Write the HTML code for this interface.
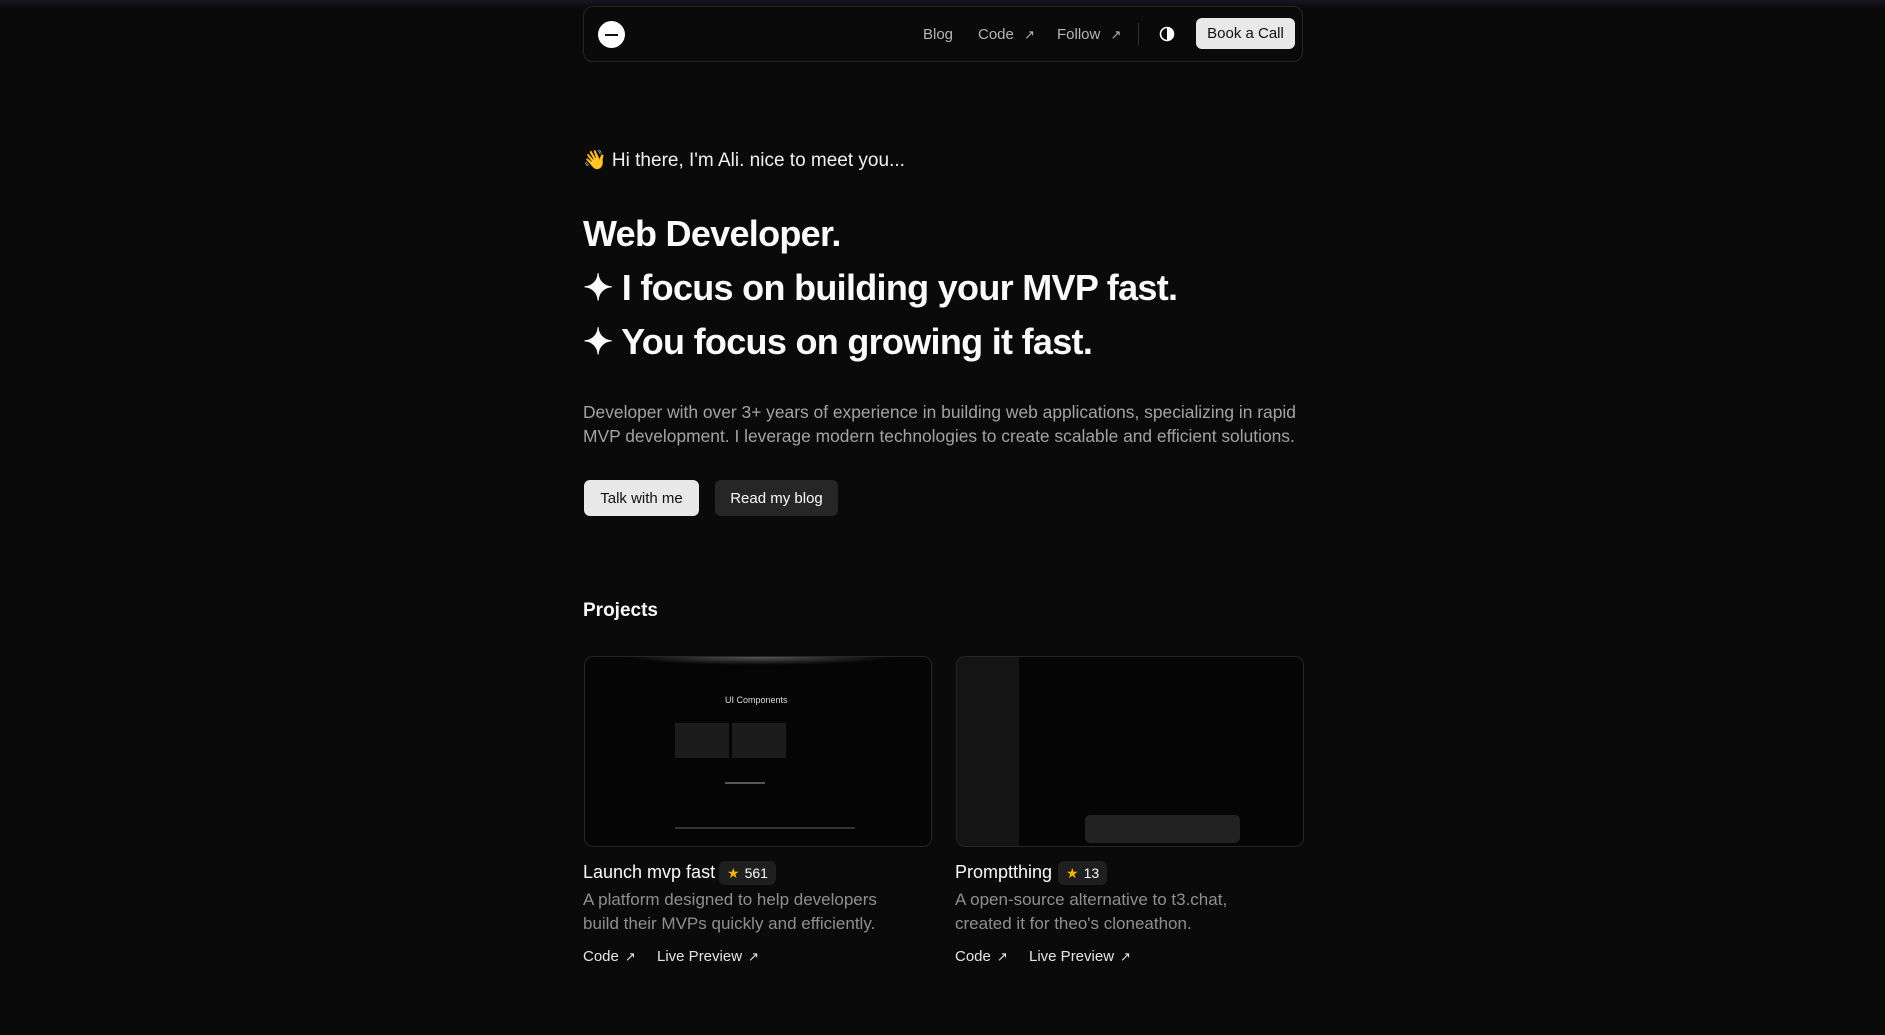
<!DOCTYPE html>
<html><head><meta charset="utf-8">
<style>
*{box-sizing:border-box;margin:0;padding:0}
html,body{width:1885px;height:1035px;overflow:hidden;background:#0a0a0a;color:#fafafa;font-family:"Liberation Sans",sans-serif}
body{background:linear-gradient(#1a1425 0px,#0a0a0a 8px)}
.abs{position:absolute}
.nav{left:583px;top:6px;width:720px;height:56px;border:1px solid #262626;border-radius:10px;background:#0a0a0a}
.logo{left:598px;top:21px;width:27px;height:27px;border-radius:50%;background:#fff}
.navlink{top:26px;font-size:15px;color:#b5b5b5}
.btn{border-radius:6px;font-size:15px;display:flex;align-items:center;justify-content:center}
h1{position:absolute;left:583px;top:207px;font-size:36px;font-weight:700;line-height:54px;letter-spacing:-0.7px;color:#fafafa}
.p{left:583px;top:400px;width:730px;font-size:17.4px;line-height:24px;color:#a3a3a3}
.card{width:348px;height:191px;top:656px;border:1px solid #262626;border-radius:9px;background:#050505;overflow:hidden}
.title{top:862px;font-size:18px;color:#fafafa}
.badge{top:861px;height:24px;border-radius:6px;background:#1f1f1f;font-size:14px;display:flex;align-items:center;padding:0 8px;gap:5px}
.desc{top:888px;font-size:17px;line-height:24px;color:#8f8f8f;width:305px}
.lk{top:948px;font-size:15px;color:#e5e5e5}
.ar{font-size:13px;margin-left:6px}
</style></head><body>
<div class="abs nav"></div>
<div class="abs logo"></div>
<div class="abs" style="left:605px;top:34px;width:13px;height:2px;background:#111"></div>
<div class="abs navlink" style="left:923px">Blog</div>
<div class="abs navlink" style="left:978px">Code <span class="ar">↗</span></div>
<div class="abs navlink" style="left:1057px">Follow <span class="ar">↗</span></div>
<div class="abs" style="left:1138px;top:23px;width:1px;height:22px;background:#333"></div>
<svg class="abs" style="left:1159px;top:26px" width="16" height="16" viewBox="0 0 16 16"><circle cx="8" cy="8" r="6.5" fill="none" stroke="#fff" stroke-width="1.6"/><path d="M8 1.5A6.5 6.5 0 0 1 8 14.5Z" fill="#fff"/></svg>
<div class="abs btn" style="left:1196px;top:18px;width:99px;height:31px;background:#e8e8e8;color:#111">Book a Call</div>

<div class="abs" style="left:583px;top:148px;font-size:19px;color:#f0f0f0">👋 Hi there, I'm Ali. nice to meet you...</div>
<h1>Web Developer.<br>✦ I focus on building your MVP fast.<br>✦ You focus on growing it fast.</h1>
<div class="abs p">Developer with over 3+ years of experience in building web applications, specializing in rapid MVP development. I leverage modern technologies to create scalable and efficient solutions.</div>
<div class="abs btn" style="left:584px;top:480px;width:115px;height:36px;background:#e8e8e8;color:#111">Talk with me</div>
<div class="abs btn" style="left:715px;top:480px;width:123px;height:36px;background:#262626;color:#fafafa">Read my blog</div>

<div class="abs" style="left:583px;top:600px;font-size:19px;font-weight:700">Projects</div>

<div class="abs card" style="left:584px">
 <div class="abs" style="left:40px;top:0;width:268px;height:8px;background:radial-gradient(ellipse at center top,#555,transparent 70%)"></div>
 <div class="abs" style="left:140px;top:38px;font-size:9px;color:#ddd">UI Components</div>
 <div class="abs" style="left:90px;top:66px;width:54px;height:35px;background:#1c1c1c"></div>
 <div class="abs" style="left:147px;top:66px;width:54px;height:35px;background:#1c1c1c"></div>
 <div class="abs" style="left:140px;top:125px;width:40px;height:2px;background:#555"></div>
 <div class="abs" style="left:90px;top:170px;width:180px;height:2px;background:#333"></div>
</div>
<div class="abs card" style="left:956px">
 <div class="abs" style="left:0;top:0;width:62px;height:191px;background:#141414"></div>
 <div class="abs" style="left:128px;top:158px;width:155px;height:28px;border-radius:5px;background:#222"></div>
</div>

<div class="abs title" style="left:583px">Launch mvp fast</div>
<div class="abs badge" style="left:719px"><span style="color:#f5b301">★</span>561</div>
<div class="abs desc" style="left:583px">A platform designed to help developers build their MVPs quickly and efficiently.</div>
<div class="abs lk" style="left:583px">Code<span class="ar">↗</span></div>
<div class="abs lk" style="left:657px">Live Preview<span class="ar">↗</span></div>

<div class="abs title" style="left:955px">Promptthing</div>
<div class="abs badge" style="left:1058px"><span style="color:#f5b301">★</span>13</div>
<div class="abs desc" style="left:955px">A open-source alternative to t3.chat, created it for theo's cloneathon.</div>
<div class="abs lk" style="left:955px">Code<span class="ar">↗</span></div>
<div class="abs lk" style="left:1029px">Live Preview<span class="ar">↗</span></div>
</body></html>
